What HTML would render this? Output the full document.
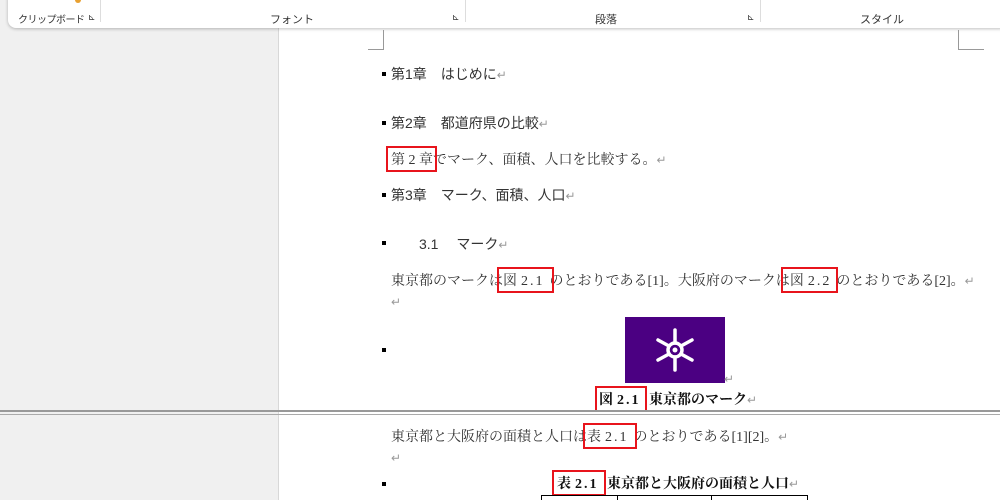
<!DOCTYPE html><html style="height:500px;overflow:hidden"><head><meta charset="utf-8"><style>
body{margin:0;width:1000px;height:500px;overflow:hidden;background:#fff;position:relative;font-family:"Liberation Serif","Noto Serif CJK SC",serif;color:#333}
.a{position:absolute;white-space:nowrap}
.g{font-family:"Liberation Sans","Noto Sans CJK JP",sans-serif;color:#333}
.b{position:absolute;width:4px;height:4px;background:#000}
.r{position:absolute;border:2px solid #e8141c}
.m{color:#999;font-size:12px;font-weight:normal}
.s{letter-spacing:2px;margin-left:4px;margin-right:5px}
</style></head><body>
<div class="a" style="left:0;top:0;width:278px;height:500px;background:#f0f0f0;border-right:1px solid #d8d8d8"></div>
<div class="a" style="left:8px;top:-10px;width:1000px;height:38px;background:#fff;border-radius:8px;box-shadow:0 1px 3px rgba(0,0,0,.25)"></div>
<div class="a g" style="left:18px;top:11px;font-size:10px;letter-spacing:-0.5px">クリップボード</div>
<div class="a g" style="left:88px;top:12px;font-size:9px">⊾</div>
<div class="a" style="left:100px;top:0;width:1px;height:22px;background:#ddd"></div>
<div class="a g" style="left:270px;top:11px;font-size:11px">フォント</div>
<div class="a g" style="left:452px;top:12px;font-size:9px">⊾</div>
<div class="a" style="left:465px;top:0;width:1px;height:22px;background:#ddd"></div>
<div class="a g" style="left:595px;top:11px;font-size:11px">段落</div>
<div class="a g" style="left:747px;top:12px;font-size:9px">⊾</div>
<div class="a" style="left:760px;top:0;width:1px;height:22px;background:#ddd"></div>
<div class="a g" style="left:860px;top:11px;font-size:11px">スタイル</div>
<div class="a" style="left:75px;top:0;width:6px;height:3px;background:#e8a030;border-radius:0 0 3px 3px"></div>
<div class="a" style="left:368px;top:30px;width:15px;height:19px;border-right:1px solid #999;border-bottom:1px solid #999"></div>
<div class="a" style="left:958px;top:30px;width:25px;height:19px;border-left:1px solid #999;border-bottom:1px solid #999"></div>
<div class="b" style="left:382px;top:72px"></div><div class="a g" style="left:391px;top:64px;font-size:14px">第1章　はじめに<span class="m">↵</span></div>
<div class="b" style="left:382px;top:121px"></div><div class="a g" style="left:391px;top:113px;font-size:14px">第2章　都道府県の比較<span class="m">↵</span></div>
<div class="a" style="left:391px;top:149px;font-size:14px">第 2 章でマーク、面積、人口を比較する。<span class="m">↵</span></div>
<div class="r" style="left:386px;top:146px;width:47px;height:22px"></div>
<div class="b" style="left:382px;top:193px"></div><div class="a g" style="left:391px;top:185px;font-size:14px">第3章　マーク、面積、人口<span class="m">↵</span></div>
<div class="b" style="left:382px;top:241px"></div><div class="a g" style="left:419px;top:234px;font-size:14px">3.1　 マーク<span class="m">↵</span></div>
<div class="a" style="left:391px;top:270px;font-size:14px">東京都のマークは図<span class="s">2.1</span>のとおりである[1]。大阪府のマークは図<span class="s">2.2</span>のとおりである[2]。<span class="m">↵</span></div>
<div class="r" style="left:497px;top:267px;width:53px;height:22px"></div>
<div class="r" style="left:781px;top:267px;width:53px;height:22px"></div>
<div class="a m" style="left:391px;top:295px">↵</div>
<div class="b" style="left:382px;top:348px"></div>
<div class="a" style="left:625px;top:317px;width:100px;height:66px;background:#4b0082">
<svg width="100" height="66" viewBox="0 0 100 66"><g stroke="#fff" stroke-width="3.5" stroke-linecap="round" fill="none"><circle cx="50" cy="33" r="7"/><line x1="50" y1="13" x2="50" y2="26"/><line x1="50" y1="40" x2="50" y2="53"/><line x1="33" y1="23" x2="44" y2="29"/><line x1="56" y1="37" x2="67" y2="43"/><line x1="33" y1="43" x2="44" y2="37"/><line x1="56" y1="29" x2="67" y2="23"/></g><circle cx="50" cy="33" r="2.5" fill="#fff"/></svg></div>
<div class="a m" style="left:724px;top:372px">↵</div>
<div class="a" style="left:599px;top:389px;font-size:14px;font-weight:bold;color:#111">図<span class="s">2.1</span> 東京都のマーク<span class="m">↵</span></div>
<div class="r" style="left:595px;top:386px;width:48px;height:22px"></div>
<div class="a" style="left:0;top:410px;width:1000px;height:2px;background:#999"></div>
<div class="a" style="left:0;top:414px;width:1000px;height:1px;background:#aaa"></div>
<div class="a" style="left:391px;top:426px;font-size:14px">東京都と大阪府の面積と人口は表<span class="s">2.1</span>のとおりである[1][2]。<span class="m">↵</span></div>
<div class="r" style="left:583px;top:423px;width:50px;height:22px"></div>
<div class="a m" style="left:391px;top:451px">↵</div>
<div class="b" style="left:382px;top:482px"></div>
<div class="a" style="left:557px;top:473px;font-size:14px;font-weight:bold;color:#111">表<span class="s">2.1</span> 東京都と大阪府の面積と人口<span class="m">↵</span></div>
<div class="r" style="left:552px;top:470px;width:50px;height:22px"></div>
<div class="a" style="left:541px;top:495px;width:265px;height:5px;border:1px solid #000;border-bottom:none"></div>
<div class="a" style="left:617px;top:495px;width:1px;height:5px;background:#000"></div>
<div class="a" style="left:711px;top:495px;width:1px;height:5px;background:#000"></div>
</body></html>
